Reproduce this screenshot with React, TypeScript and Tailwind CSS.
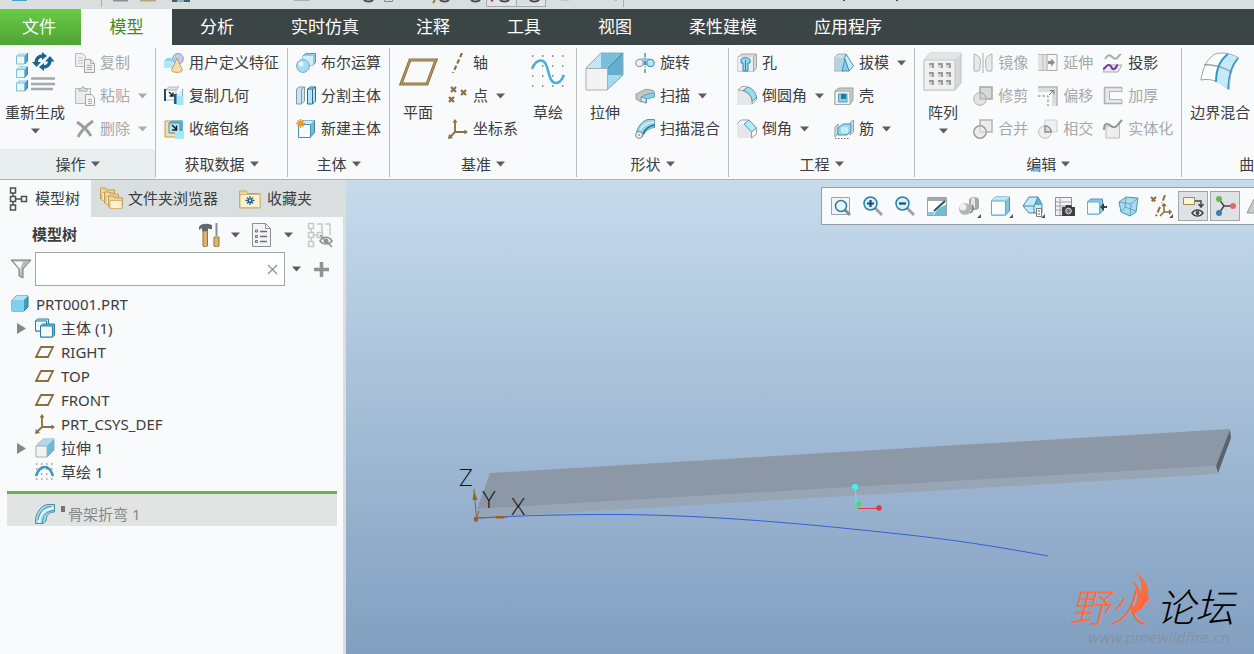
import type { ReactNode } from 'react'

function Svg({ size = 20, box = 20, children }: { size?: number; box?: number; children: ReactNode }) {
  return (
    <svg width={size} height={size} viewBox={`0 0 ${box} ${box}`} fill="none" className="shrink-0" aria-hidden>
      {children}
    </svg>
  )
}

function Caret({ faded = false }: { faded?: boolean }) {
  return (
    <svg width="9" height="6" viewBox="0 0 9 6" className="shrink-0" aria-hidden>
      <path d="M0 0.5h9L4.5 5.5z" fill={faded ? '#a9abad' : '#5b5d60'} />
    </svg>
  )
}

/* small isometric box, used by many of the icons */
function Box({ x, y, s, d }: { x: number; y: number; s: number; d: number }) {
  return (
    <g strokeLinejoin="round">
      <path d={`M${x} ${y + d}l${d} ${-d}h${s}v${s}l${-d} ${d}z`} fill="#4aa3c8" />
      <path d={`M${x} ${y + d}l${d} ${-d}h${s}l${-d} ${d}z`} fill="#b9e4f4" />
      <rect x={x} y={y + d} width={s} height={s} fill="#eaf8fe" stroke="#7dbdd8" strokeWidth="1" />
      <path d={`M${x + s + d} ${y}v${s}l${-d} ${d}`} stroke="#3487ad" strokeWidth="1" />
    </g>
  )
}

const icons = {
  regenerate: (
    <Svg size={40} box={40}>
      <Box x={1.5} y={1} s={8} d={3} />
      <Box x={1.5} y={14.5} s={8} d={3} />
      <Box x={1.5} y={28} s={8} d={3} />
      <path d="M21 11c0-4.500 3-7 7-7" stroke="#19668d" strokeWidth="3.500" />
      <path d="M17 10h9l-4.500 5z" fill="#19668d" />
      <path d="M35 8c0 4.500-3 7-7 7" stroke="#19668d" strokeWidth="3.500" />
      <path d="M30 9.500h9.500L35 4z" fill="#19668d" />
      <path d="M27 0l5 4-5 4zM29 19l-5-4 5-4z" fill="#19668d" />
      <path d="M16 26.500h24M16 32h24M16 37h22" stroke="#a6a8aa" strokeWidth="2.500" />
    </Svg>
  ),
  copy: (
    <Svg>
      <path d="M.5.500h7l3 3v10H.5z" fill="#f0f0f0" stroke="#b5b5b5" />
      <path d="M3 5h5M3 7.500h5M3 10h5" stroke="#c4c4c4" />
      <path d="M9.500 6.500h6l4 4v9h-10z" fill="#eee" stroke="#a5a5a5" />
      <path d="M15.500 6.500v4h4M12 12.500h5M12 14.500h5M12 16.500h5" stroke="#b0b0b0" />
    </Svg>
  ),
  paste: (
    <Svg>
      <rect x=".5" y="2.500" width="15" height="15" fill="#ebebeb" stroke="#b9b9b9" />
      <path d="M4 5V2.500h2.500C6.500 0 9.500 0 9.500 2.500H12V5z" fill="#ddd" stroke="#b0b0b0" />
      <path d="M10.500 8.500h6l3 3v8h-9z" fill="#f4f4f4" stroke="#a5a5a5" />
      <path d="M13 13.500h4M13 15.500h4M13 17.500h4" stroke="#b0b0b0" />
    </Svg>
  ),
  remove: (
    <Svg>
      <path d="M2 3c6 4 11 9 14 14M18 2C11 7 6 12 3 18" stroke="#9b9c9e" strokeWidth="2.800" />
    </Svg>
  ),
  udf: (
    <Svg>
      <circle cx="14" cy="5.800" r="5.300" fill="#c5cbf0" stroke="#8c96cf" />
      <path d="M0 8l3-3h9l-3 3v7H0z" fill="#8fd3ee" />
      <path d="M0 8h9v7H0z" fill="#b4e6f7" />
      <path d="M13 5l5.500 12.500c-1 2.500-9.500 2.500-11 0z" fill="#f2dfae" stroke="#c39c56" />
    </Svg>
  ),
  copyGeometry: (
    <Svg>
      <path d="M1 4l4-3h10l-3 3z" fill="#e4e5e6" stroke="#b5b5b5" />
      <path d="M1 4h11v10H1z" fill="#fff" stroke="#b5b5b5" />
      <path d="M1 3v12" stroke="#1e4e66" strokeWidth="2" />
      <path d="M5 6l4 4M9 6.500V10H5.500" stroke="#222" strokeWidth="1.500" />
      <path d="M10 8h3v10h-3z" fill="#1b5c7c" />
      <path d="M12.500 10h7v9h-7z" fill="#a5e2f7" />
      <path d="M12.500 9l5-4h1v5h-6z" fill="#d9eaf1" />
      <path d="M18.500 3v7" stroke="#74aec7" />
    </Svg>
  ),
  shrinkwrap: (
    <Svg>
      <path d="M1 2h17v5l-5 11H1z" fill="#f6deaa" stroke="#c89a4c" />
      <path d="M5 4l2-2.500h12v11l-3 1z" fill="#5fb0d0" />
      <path d="M5 4h11v10H5z" fill="#b7e2f2" stroke="#3b90b6" />
      <path d="M8 6l4.500 4.500M12.500 6.500V11H8" stroke="#222" strokeWidth="1.500" />
      <rect x="11" y="12" width="9" height="8" fill="#a5e8fb" />
    </Svg>
  ),
  boolean: (
    <Svg>
      <path d="M7 3l2.500-2.500h10v9L17 12H7z" fill="#8ecbe2" stroke="#4b9dbf" />
      <path d="M7 3h10v9H7z" fill="#d5eff9" />
      <circle cx="7" cy="13" r="6.400" fill="#a9dcf0" stroke="#67aecb" />
      <circle cx="5" cy="11" r="2.500" fill="#e3f6fd" />
    </Svg>
  ),
  splitBody: (
    <Svg>
      <path d="M.5 3l3-2h5v14l-3 3h-5z" fill="#c9e4ea" stroke="#7f9ba3" />
      <path d="M5.500 3v15M5.500 3l3-2" stroke="#7f9ba3" />
      <path d="M11.500 3l3-2h5v14l-3 3h-5z" fill="#b5e6f6" stroke="#236f93" />
      <path d="M16.500 3v15M11.500 3h5l3-2" stroke="#236f93" />
    </Svg>
  ),
  newBody: (
    <Svg>
      <path d="M2.500 5l4-3.500h12v12l-4 4.500h-12z" fill="#74bad6" stroke="#3d86a6" />
      <path d="M2.500 5l4-3.500h12l-4 3.500z" fill="#cfeaf5" />
      <path d="M2.500 5.500h12v13h-12z" fill="#f3fbff" stroke="#4793b3" />
      <path d="M4.500 0v9M0 4.500h9M1.500 1.500l6 6M7.500 1.500l-6 6" stroke="#ec9a1e" strokeWidth="1.500" />
    </Svg>
  ),
  plane: (
    <Svg size={40} box={40}>
      <path d="M12 8h26l-9 24H3z" stroke="#8c7040" strokeWidth="3" />
      <path d="M12 8h26l-9 24H3z" stroke="#c0a36b" strokeWidth="1" />
    </Svg>
  ),
  axis: (
    <Svg>
      <path d="M14 0L5 20" stroke="#8b6f3c" strokeWidth="2.200" strokeDasharray="4.500 2.500" />
    </Svg>
  ),
  point: (
    <Svg>
      <path d="M3 1l5 5M8 1L3 6M13 4l5 5M18 4l-5 5M1 11l5 5M6 11l-5 5" stroke="#8b6f3c" strokeWidth="2.200" />
    </Svg>
  ),
  csys: (
    <Svg>
      <path d="M7 2v11h11M7 13l-5 5" stroke="#8b6f3c" strokeWidth="1.800" />
      <path d="M7 0l2.500 3.500h-5zM20 13l-3.500 2.500v-5zM0 20l1-5 4 4z" fill="#8b6f3c" />
    </Svg>
  ),
  sketch: (
    <Svg size={40} box={40}>
      {[4, 14, 24, 34].map((y) => (
        <path key={y} d={`M4 ${y}h34`} stroke="#777" strokeWidth="1.500" strokeDasharray="1.500 8.500" />
      ))}
      <path d="M4 17c4-10 12-12 15-2 3 11 4 16 9 16 4 0 6-3 8-8" stroke="#4aaedb" strokeWidth="2.500" />
    </Svg>
  ),
  extrude: (
    <Svg size={40} box={40}>
      <path d="M1 16L16 1h22v22L22 38" fill="#8ecbe3" />
      <path d="M1 16L16 1v15z" fill="#c3e8f5" />
      <path d="M16 1h22L22 16h-6z" fill="#79bfdb" />
      <path d="M38 1v22L22 38V17z" fill="#62afcf" />
      <path d="M38 23L22 38V23z" fill="#a5daee" />
      <path d="M1 16L16 1h22v22L22 38" stroke="#8fa9b5" />
      <path d="M22 17L38 1" stroke="#3d87a8" />
      <path d="M1 16.500h21.500V38H1z" fill="#f2f3f4" stroke="#aaacae" />
    </Svg>
  ),
  revolve: (
    <Svg>
      <path d="M5 6c3-2 7-2 10 0v8c-3-2-7-2-10 0z" fill="#9bd5ea" />
      <circle cx="4.500" cy="10" r="3.700" fill="#f2f3f4" stroke="#a0a2a4" strokeWidth="1.300" />
      <circle cx="15.500" cy="10" r="3.700" fill="#b9e4f4" stroke="#4aa0c3" strokeWidth="1.300" />
      <path d="M10 0v20" stroke="#444" strokeDasharray="4 1.500 1 1.500" />
    </Svg>
  ),
  sweep: (
    <Svg>
      <path d="M1 8l8-4c3-1.500 6-.5 10 1v5l-9 1v4l-4 1-5-3z" fill="#c3c7c9" stroke="#9a9ea0" />
      <path d="M19.500 7v4l-8 2v4l-5-2v-4c5-3 8-4 13-4z" fill="#8fcfe6" stroke="#5ba2bf" />
      <path d="M6 11l5 1.500V17l-5-2z" fill="#d9f1fa" stroke="#888" />
    </Svg>
  ),
  sweptBlend: (
    <Svg>
      <path d="M1 15C3 7 8 1 13 .5h6.500v8C14 9 10 12 7 18z" fill="#98d3e9" stroke="#5798b4" />
      <path d="M5 11C8 6 12 3 19.500 3" stroke="#d8f1fa" strokeWidth="1.500" />
      <path d="M8 15c2-5 6-8 11.500-9" stroke="#2c6984" strokeWidth="1.500" />
      <circle cx="4" cy="16" r="3.400" fill="#f1f2f3" stroke="#888" />
      <circle cx="4" cy="16" r="1" fill="#999" />
    </Svg>
  ),
  hole: (
    <Svg>
      <path d="M1 4l4-3h14.500v14l-3 3.500H1z" fill="#d6d8da" stroke="#a5a7a9" />
      <path d="M1 4h15.500v14.500H1z" fill="#ededee" />
      <path d="M16.500 4v14.500M16.500 4l3-3" stroke="#a5a7a9" />
      <path d="M4 7c0-3 9-3 9 0v3h-2v8H6v-8H4z" fill="#9bd8ee" stroke="#2e86ab" />
      <path d="M8.500 7v11" stroke="#2e86ab" />
    </Svg>
  ),
  round: (
    <Svg>
      <path d="M0 4h6c6 0 9 5 9 10v5H0z" fill="#e5e6e7" />
      <path d="M1 4l4-3.500c9-.5 14 5 14.500 13L15 18c1-8-5-14-14-14z" fill="#f0f1f2" stroke="#9b9da0" />
      <path d="M6 4.500L11 1c5 1.500 8 6 8.500 11L15 15c0-5-4-9.500-9-10.500z" fill="#9fdcf2" stroke="#4d9dbc" />
    </Svg>
  ),
  chamfer: (
    <Svg>
      <path d="M0 5h7l7 7v7H0z" fill="#e5e6e7" />
      <path d="M7 5l5-4 7.500 8-5 4z" fill="#b4e8f9" stroke="#4d9dbc" />
      <path d="M0 5l4-4h8M14.500 19v-6M19.500 9v6l-5 4" stroke="#9b9da0" />
    </Svg>
  ),
  draft: (
    <Svg>
      <path d="M0 5l4-4h8l-2 17H0z" fill="#d2dde2" />
      <path d="M0 5h10v13H0z" fill="#a8cfdd" opacity=".7" />
      <path d="M0 5l4-4h8M0 18h10" stroke="#a6b0b4" />
      <path d="M12 1l7.500 12-4.500 5-5-12z" fill="#c6edf9" stroke="#3d95b9" />
      <path d="M11 6l-3 12h7z" fill="#8ccde6" stroke="#3d95b9" />
    </Svg>
  ),
  shell: (
    <Svg>
      <path d="M1 5l4-3h14v12l-3 4.500H1z" fill="#c9cbcd" stroke="#9fa1a3" />
      <path d="M1 5h15v13.500H1z" fill="#eeefef" stroke="#a6a8aa" />
      <path d="M4.500 8h8.500v8H4.500z" fill="#8ecfe8" stroke="#5b9fbb" />
      <path d="M7 8h5v5H7z" fill="#1d7ba7" />
    </Svg>
  ),
  rib: (
    <Svg>
      <path d="M1 8l3-3v10l-3 3zM16 4l3.500-3v12L16 16z" fill="#d8dadb" stroke="#8aa2ad" />
      <path d="M4 9l5-4h8v7l-4 4H4z" fill="#9cd8ed" stroke="#3f93b5" />
      <path d="M7 8h7v6H7z" fill="#c5ecf9" />
      <path d="M1 19.500h14" stroke="#777" strokeDasharray="1.500 1.500" />
    </Svg>
  ),
  pattern: (
    <Svg size={40} box={40}>
      <path d="M1 8l6-7h31v30l-6 7H1z" fill="#d5d6d7" stroke="#c3c4c5" />
      <path d="M1 8l6-7h31l-6 7z" fill="#e4e5e5" />
      <path d="M1 8h31v30H1z" fill="#f0f0f0" stroke="#c5c5c5" />
      {[11, 20, 28].map((y) => (
        <g key={y}>
          {[6, 15, 23].map((x) => (
            <g key={x}>
              <rect x={x} y={y} width="5" height="5" fill="#9b9b9b" />
              <path d={`M${x} ${y + 5}v-3h3v3`} fill="#d3d3d3" />
            </g>
          ))}
        </g>
      ))}
    </Svg>
  ),
  mirror: (
    <Svg>
      <path d="M1 1c4 1 7 4 6.500 8-.5 4 0 7-1.500 9H1zM19 1c-4 1-7 4-6.500 8 .5 4 0 7 1.500 9H19z" fill="#e9e9e9" stroke="#b3b3b3" />
      <path d="M10 0v20" stroke="#a9a9a9" />
    </Svg>
  ),
  extend: (
    <Svg>
      <path d="M0 1.500h9v16H0z" fill="#e2e2e2" />
      <path d="M0 1.500h9M0 17.500h9M5 2v15" stroke="#bdbdbd" />
      <path d="M9 1.500h10v16H9z" fill="#f7f7f7" stroke="#a9a9a9" />
      <path d="M10 8h3V5.500L17 9.500l-4 4V11h-3z" fill="#8f8f8f" />
    </Svg>
  ),
  project: (
    <Svg>
      <path d="M2 6c2-3 4-5 6-3s4 4 6 2 3-4 4-3" stroke="#aaabad" strokeWidth="2" />
      <path d="M4 12h15l-4 7H0z" fill="#ececec" stroke="#a9abad" />
      <path d="M0 16c3-1 3-4 6-4s2 5 5 4 2-4 4-4" stroke="#7437b5" strokeWidth="2.200" />
    </Svg>
  ),
  trim: (
    <Svg>
      <path d="M7 1h12v12H7z" fill="#d9d9d9" stroke="#a5a5a5" strokeWidth="1.500" />
      <circle cx="7" cy="13" r="6.300" fill="#e4e4e4" stroke="#b0b0b0" />
      <path d="M7 7c4 0 6 3 6 6H7z" fill="#d3d3d3" stroke="#aaa" />
    </Svg>
  ),
  offset: (
    <Svg>
      <path d="M0 1h19v19h-5V6H0z" fill="#dedede" />
      <path d="M0 1h19v19" stroke="#b4b4b4" strokeWidth="1.500" />
      <path d="M0 10h10v10" stroke="#777" strokeDasharray="2.500 2" />
      <path d="M11 9l4-4M12 4.500h4v4" stroke="#777" />
    </Svg>
  ),
  thicken: (
    <Svg>
      <path d="M1.500 1.500H19v4H6.500v8H19v4H1.500z" fill="#e8e8e8" stroke="#b1b1b1" />
      <path d="M19 1.500H1.500v16H19" stroke="#b0b0b0" strokeWidth="1.500" />
    </Svg>
  ),
  merge: (
    <Svg>
      <path d="M7 1h12v12H7z" fill="#ececec" stroke="#b4b4b4" strokeWidth="1.500" />
      <circle cx="7" cy="13" r="6.200" fill="#ededed" stroke="#9e9e9e" strokeWidth="1.500" />
      <path d="M7 13V7M7 13h6" stroke="#c5c5c5" />
    </Svg>
  ),
  intersect: (
    <Svg>
      <path d="M7 1h12v12H7z" fill="#f0f0f0" stroke="#cfcfcf" />
      <circle cx="7" cy="13" r="6.300" fill="#ececec" fillOpacity=".8" stroke="#bdbdbd" />
      <path d="M7 7c4 0 6 3 6 6H7z" fill="#dcdcdc" stroke="#8f8f8f" strokeWidth="1.500" />
    </Svg>
  ),
  solidify: (
    <Svg>
      <path d="M3 8c4-3 6 2 9 0s3-4 4.500-4V19H3z" fill="#eee" stroke="#bbb" />
      <path d="M1 11c0-9 5-6 8-3.500C13 10 15 5 19 1" stroke="#949494" strokeWidth="2" />
    </Svg>
  ),
  boundary: (
    <Svg size={40} box={40}>
      <path d="M1 28C3 14 8 6 15 2c7-2 15-1 24 4-7 8-9 16-10 32-8-8-17-12-28-10z" fill="#fafcfd" stroke="#9fa2a4" />
      <path d="M27 2l12 4c-7 8-9 16-10 32-4-4-8-6-13-8 0-14 4-22 11-28z" fill="#c3eaf8" />
      <path d="M4 13c8-1 16 1 28 7" stroke="#9fa2a4" strokeWidth="1.500" />
      <path d="M28 2c-8 6-12 15-12 28" stroke="#3797c2" strokeWidth="2" />
      <path d="M38 6c-7 8-9 16-10 31" stroke="#3797c2" strokeWidth="1.500" />
    </Svg>
  ),
}

type IconName = keyof typeof icons
type Command = { icon: IconName; label: string; caret?: boolean; faded?: boolean }

function SmallCommand({ icon, label, caret, faded }: Command) {
  return (
    <button
      type="button"
      className={`flex h-[33px] items-center whitespace-nowrap ${faded ? 'text-[#a6a8aa]' : 'text-[#3b3d40]'}`}
    >
      {icons[icon]}
      <span className="pl-[5px]">{label}</span>
      {caret && (
        <span className="pl-2">
          <Caret faded={faded} />
        </span>
      )}
    </button>
  )
}

function BigCommand({ icon, label, caret }: Command) {
  return (
    <button type="button" className="flex min-w-10 flex-col items-center self-start whitespace-nowrap pt-[6px]">
      {icons[icon]}
      <span className="pt-[10px] leading-5">{label}</span>
      {caret && (
        <span className="pt-[6px]">
          <Caret />
        </span>
      )}
    </button>
  )
}

function CommandColumn({ items }: { items: Command[] }) {
  return (
    <div className="flex flex-col items-start">
      {items.map((item) => (
        <SmallCommand key={item.label} {...item} />
      ))}
    </div>
  )
}

function Group({ title, active, children }: { title: string; active?: boolean; children: ReactNode }) {
  return (
    <>
      <section className="flex shrink-0 flex-col">
        <div className={`flex h-[99px] gap-[10px] pr-2 ${active ? 'pl-[5px]' : 'pl-2'}`}>{children}</div>
        <button
          type="button"
          className={`mt-1 flex h-[30px] items-center justify-center gap-[5px] whitespace-nowrap ${active ? 'bg-[#e9eeef]' : ''}`}
        >
          {title}
          <Caret />
        </button>
      </section>
      <span className="my-[2px] w-px shrink-0 bg-[#b9bec1]" />
    </>
  )
}

/* the lower edge of the quick access toolbar */
function QuickAccess() {
  return (
    <div className="h-[9px] overflow-hidden bg-[#d9dfdf]">
      <svg width="960" height="9" viewBox="0 0 960 9" fill="none" aria-hidden>
        <path d="M12 0h15" stroke="#4d9fc0" strokeWidth="2" />
        <path d="M101.500 0v7M623.500 0v7" stroke="#a9aeb0" />
        <path d="M113 .5h15" stroke="#8d9092" strokeWidth="2" />
        <path d="M140 .5h16" stroke="#b8a67c" strokeWidth="2" />
        <path d="M172 .5h18" stroke="#4b5a63" strokeWidth="3" />
        <path d="M177 .5h7" stroke="#7fb6d0" strokeWidth="3" />
        <path d="M294 .5h16" stroke="#adb1b3" />
        <path d="M364 0c2 2 7 2 9 0M440 0c2 2 7 2 9 0M471 0c2 2 7 2 9 0" stroke="#45494b" strokeWidth="2" />
        <path d="M384.500 0v1.500h8V0" stroke="#888" />
        <path d="M433 3l2-3" stroke="#9b7a3f" strokeWidth="2" />
        <path d="M486.500 0v6.500h30V0M516.500 6.500h29V0" fill="#e0e4e4" stroke="#a5a9ab" />
        <path d="M500 0c2 2 7 2 9 0M530 0c2 2 7 2 9 0" stroke="#45494b" strokeWidth="2" />
        <path d="M491 1l2-1" stroke="#9b3f3f" strokeWidth="2" />
        <path d="M561 .5h8M614 .5h3" stroke="#bfc4c5" />
        <path d="M843 .5h2M896 .5h2" stroke="#45494b" />
      </svg>
    </div>
  )
}

const tabs = ['分析', '实时仿真', '注释', '工具', '视图', '柔性建模', '应用程序']

function TabBar() {
  return (
    <nav className="flex h-9 shrink-0 overflow-hidden bg-[#3c4545] text-[17px] text-white">
      <button type="button" className="w-[81px] shrink-0 bg-linear-to-b from-[#68cd48] to-[#4fa335] pr-[3px]">
        文件
      </button>
      <button type="button" className="w-[91px] shrink-0 bg-[#f8fafb] text-[#3f8a25]">
        模型
      </button>
      {tabs.map((tab) => (
        <button key={tab} type="button" className="mr-px shrink-0 whitespace-nowrap px-7">
          {tab}
        </button>
      ))}
    </nav>
  )
}

function Ribbon() {
  return (
    <div className="flex h-[135px] shrink-0 overflow-hidden border-b border-[#a9b8c0] bg-[#f8fafb] pt-px">
      <Group title="操作" active>
        <BigCommand icon="regenerate" label="重新生成" caret />
        <CommandColumn
          items={[
            { icon: 'copy', label: '复制', faded: true },
            { icon: 'paste', label: '粘贴', caret: true, faded: true },
            { icon: 'remove', label: '删除', caret: true, faded: true },
          ]}
        />
      </Group>
      <Group title="获取数据">
        <CommandColumn
          items={[
            { icon: 'udf', label: '用户定义特征' },
            { icon: 'copyGeometry', label: '复制几何' },
            { icon: 'shrinkwrap', label: '收缩包络' },
          ]}
        />
      </Group>
      <Group title="主体">
        <CommandColumn
          items={[
            { icon: 'boolean', label: '布尔运算' },
            { icon: 'splitBody', label: '分割主体' },
            { icon: 'newBody', label: '新建主体' },
          ]}
        />
      </Group>
      <Group title="基准">
        <BigCommand icon="plane" label="平面" />
        <CommandColumn
          items={[
            { icon: 'axis', label: '轴' },
            { icon: 'point', label: '点', caret: true },
            { icon: 'csys', label: '坐标系' },
          ]}
        />
        <BigCommand icon="sketch" label="草绘" />
      </Group>
      <Group title="形状">
        <BigCommand icon="extrude" label="拉伸" />
        <CommandColumn
          items={[
            { icon: 'revolve', label: '旋转' },
            { icon: 'sweep', label: '扫描', caret: true },
            { icon: 'sweptBlend', label: '扫描混合' },
          ]}
        />
      </Group>
      <Group title="工程">
        <CommandColumn
          items={[
            { icon: 'hole', label: '孔' },
            { icon: 'round', label: '倒圆角', caret: true },
            { icon: 'chamfer', label: '倒角', caret: true },
          ]}
        />
        <CommandColumn
          items={[
            { icon: 'draft', label: '拔模', caret: true },
            { icon: 'shell', label: '壳' },
            { icon: 'rib', label: '筋', caret: true },
          ]}
        />
      </Group>
      <Group title="编辑">
        <BigCommand icon="pattern" label="阵列" caret />
        <CommandColumn
          items={[
            { icon: 'mirror', label: '镜像', faded: true },
            { icon: 'trim', label: '修剪', faded: true },
            { icon: 'merge', label: '合并', faded: true },
          ]}
        />
        <CommandColumn
          items={[
            { icon: 'extend', label: '延伸', faded: true },
            { icon: 'offset', label: '偏移', faded: true },
            { icon: 'intersect', label: '相交', faded: true },
          ]}
        />
        <CommandColumn
          items={[
            { icon: 'project', label: '投影' },
            { icon: 'thicken', label: '加厚', faded: true },
            { icon: 'solidify', label: '实体化', faded: true },
          ]}
        />
      </Group>
      <section className="flex w-[158px] shrink-0 flex-col">
        <div className="flex h-[99px] px-2">
          <BigCommand icon="boundary" label="边界混合" />
        </div>
        <button type="button" className="mt-1 flex h-[30px] items-center justify-center gap-[5px]">
          曲面
          <Caret />
        </button>
      </section>
    </div>
  )
}

const smallPlane = (
  <Svg>
    <path d="M6 5h12l-5 10H1z" stroke="#8b6f3c" strokeWidth="1.800" />
  </Svg>
)

const partIcon = (
  <Svg>
    <path d="M1 6l4-4h12v11l-4 4H1z" fill="#3f9cc4" stroke="#2d7ea3" />
    <path d="M1 6l4-4h12l-4 4z" fill="#b4e4f6" />
    <path d="M1 6h12v11H1z" fill="#7fd0ee" />
  </Svg>
)

const bodiesIcon = (
  <Svg>
    <path d="M.5 3l2-2h11v10l-2 2H.5z" fill="#c4eaf8" stroke="#2d7ea3" />
    <path d="M.5 3h11v10H.5z" fill="#f0fafe" stroke="#2d7ea3" />
    <path d="M5.500 8l2-2h12v11l-2 2h-12z" fill="#6dbddb" stroke="#2d7ea3" />
    <path d="M5.500 8h12v11h-12z" fill="#f0fafe" stroke="#2d7ea3" />
  </Svg>
)

const extrudeSmall = (
  <Svg>
    <path d="M1 8l7-7h11v11l-7 7z" fill="#6fb9d8" stroke="#8fa9b5" />
    <path d="M1 8l7-7h11l-7 7z" fill="#a9daee" />
    <path d="M1 8h11v11H1z" fill="#f2f3f4" stroke="#aaacae" />
  </Svg>
)

const sketchSmall = (
  <Svg>
    <path d="M1 2h18M1 7h18M1 12h18M1 17h18" stroke="#999" strokeWidth="1.500" strokeDasharray="1.500 3.500" />
    <path d="M1 14C3 8 6 5 10 5s6 3 8 9" stroke="#3797c2" strokeWidth="2.500" />
  </Svg>
)

const bendIcon = (
  <Svg>
    <path d="M.5 15C2 7 7 1 13 .5h6.500V8c-6 0-8 3-8.500 9l-3 2.500H.5z" fill="#a7dcef" stroke="#4b8eaa" />
    <path d="M4 19C5 10 9 5 19 4" stroke="#e9f8fd" strokeWidth="2" />
    <path d="M7.500 19c0-8 4-12 12-12.500M3 16C4 9 8 3 16 2.500" stroke="#4b8eaa" />
  </Svg>
)

const tree: { label: string; icon: ReactNode; expandable?: boolean }[] = [
  { label: '主体 (1)', icon: bodiesIcon, expandable: true },
  { label: 'RIGHT', icon: smallPlane },
  { label: 'TOP', icon: smallPlane },
  { label: 'FRONT', icon: smallPlane },
  { label: 'PRT_CSYS_DEF', icon: icons.csys },
  { label: '拉伸 1', icon: extrudeSmall, expandable: true },
  { label: '草绘 1', icon: sketchSmall },
]

function PanelTabs() {
  return (
    <div className="flex h-[37px] bg-[#d9dfdf]">
      <button type="button" className="flex w-[91px] items-center gap-[7px] bg-[#f8fafb] pl-[9px]">
        <svg width="19" height="26" viewBox="0 0 19 26" fill="none" aria-hidden>
          <path d="M1.500 2h5v5h-5zM1.500 10.500h5v5h-5zM1.500 19h5v5h-5zM12.500 10.500h5v5h-5zM4 7v3.500M4 15.500V19M6.500 13h6" stroke="#4d5052" strokeWidth="1.500" />
        </svg>
        模型树
      </button>
      <button type="button" className="flex items-center gap-1 pl-[9px]">
        <Svg size={24} box={24}>
          {[0, 4, 8].map((n) => (
            <g key={n}>
              <path d={`M${n + 0.5} ${n + 1}h5l1 2h8v9h-14z`} fill="#f0d59c" stroke="#bf9c5c" />
              <path d={`M${n + 2} ${n + 5.5}h12v8h-12z`} fill="#fdf1cf" stroke="#d3b377" />
            </g>
          ))}
        </Svg>
        文件夹浏览器
      </button>
      <button type="button" className="flex items-center gap-[6px] pl-[21px]">
        <Svg size={22} box={22}>
          <path d="M.5 3h7l1 2.500h12.500V20H.5z" fill="#f0d59c" stroke="#c5a364" />
          <path d="M1 6.500h20v13H1z" fill="#fdf1cf" stroke="#d6b87f" />
          <path d="M11 8v9M6.500 12.500h9M8 9.500l6 6M14 9.500l-6 6" stroke="#19668d" strokeWidth="1.300" />
          <circle cx="11" cy="12.500" r="1" fill="#fdf1cf" />
        </Svg>
        收藏夹
      </button>
    </div>
  )
}

function ModelTree() {
  return (
    <aside className="flex w-[346px] shrink-0 flex-col border-r-[3px] border-[#d9dfdf] bg-[#f8fafb]">
      <PanelTabs />
      <div className="flex h-[35px] items-center pl-8">
        <h2 className="font-bold">模型树</h2>
        <div className="ml-auto flex items-center gap-[10px] pr-[10px]">
          <button type="button" aria-label="设置" className="flex items-center gap-[9px]">
            <Svg size={24} box={24}>
              <path d="M1 4c2-4 8-4 13-2v4h-3l-1-1v3H4V5L1 7z" fill="#626870" />
              <path d="M5 8h4.500v15c-1 1-3.500 1-4.500 0z" fill="#dcb473" stroke="#9b7332" />
              <path d="M18.500 0v13" stroke="#8a9096" strokeWidth="2" />
              <path d="M16 14h5v9c-1 1-4 1-5 0z" fill="#dcb473" stroke="#9b7332" />
            </Svg>
            <Caret />
          </button>
          <button type="button" aria-label="显示" className="flex items-center gap-[10px]">
            <Svg size={24} box={24}>
              <path d="M2.500.500h13l5 5v18h-18z" fill="#f1f3f5" stroke="#8d9195" />
              <path d="M15.500.500v5h5" stroke="#8d9195" />
              <path d="M10 8.500h7M10 13.500h7M10 18.500h7" stroke="#6c7074" strokeWidth="1.500" />
              <path d="M5.500 7h2v2h-2zM5.500 12.500h2v2h-2zM5.500 17.500h2v2h-2z" stroke="#6c7074" />
            </Svg>
            <Caret />
          </button>
          <button type="button" aria-label="隐藏" className="pl-1">
            <Svg size={26} box={26}>
              <path d="M1.500 1.500h5v5h-5zM1.500 10.500h5v5h-5zM1.500 19.500h5v5h-5zM10.500 10.500h5v5h-5zM4 6.500v4M4 15.500v4M6.500 13h4M10 2h5v9M18 2h5v11" stroke="#c6c8ca" strokeWidth="1.500" />
              <path d="M13 19c3-5 9-5 12 0-3 4-9 4-12 0z" stroke="#919395" strokeWidth="1.500" />
              <circle cx="19" cy="19" r="2.500" fill="#919395" />
              <path d="M13 13l12 12" stroke="#919395" strokeWidth="1.500" />
            </Svg>
          </button>
        </div>
      </div>
      <div className="flex items-center pl-[10px]">
        <Svg size={22} box={22}>
          <path d="M1 2h20l-8 9v9l-4-2v-7z" fill="#b9bbbd" stroke="#77797c" />
          <path d="M4 3.500h9l-2.500 7v6L10 11z" fill="#fafafa" />
        </Svg>
        <div className="ml-[3px] flex h-[34px] w-[250px] items-center border border-[#a3a6a8] bg-white">
          <input type="text" aria-label="过滤模型树" className="min-w-0 flex-1 px-2 outline-none" />
          <button type="button" aria-label="清除" className="pr-[6px]">
            <Svg size={11} box={11}>
              <path d="M1 1l9 9M10 1l-9 9" stroke="#8f9193" strokeWidth="1.300" />
            </Svg>
          </button>
        </div>
        <button type="button" aria-label="过滤选项" className="pl-[7px]">
          <Caret />
        </button>
        <button type="button" aria-label="添加" className="pl-[13px]">
          <Svg size={15} box={15}>
            <path d="M7.500 0v15M0 7.500h15" stroke="#8f9193" strokeWidth="3.500" />
          </Svg>
        </button>
      </div>
      <ul className="pt-[6px]">
        <li className="flex h-6 items-center gap-[5px] pl-[11px]">
          {partIcon}
          PRT0001.PRT
        </li>
        {tree.map(({ label, icon, expandable }) => (
          <li key={label} className="flex h-6 items-center pl-4">
            <span className="flex w-[19px] shrink-0">
              {expandable && (
                <button type="button" aria-label={`展开 ${label}`}>
                  <Svg size={11} box={11}>
                    <path d="M1 0l9 5.500L1 11z" fill="#85888a" />
                  </Svg>
                </button>
              )}
            </span>
            {icon}
            <span className="pl-[6px]">{label}</span>
          </li>
        ))}
      </ul>
      <div className="mx-[7px] mt-[7px] mr-[6px] flex h-[35px] items-center border-t-[3px] border-[#62b84a] bg-[#e2e3e3] pl-7 pt-2 text-[#85888a]">
        {bendIcon}
        <span className="ml-[6px] mt-1 h-[6px] w-1 self-start bg-[#707375]" />
        <span className="pl-[3px]">骨架折弯 1</span>
      </div>
    </aside>
  )
}

const corner = <path d="M24 20v4h-4z" fill="#555" />

const viewTools: { label: string; pressed?: boolean; art: ReactNode }[] = [
  {
    label: '重新调整',
    art: (
      <>
        <path d="M2.500 3.500h18v17h-18z" fill="#f3f4f4" stroke="#9fa2a4" />
        <path d="M15 15l6 6" stroke="#8b8f92" strokeWidth="3" />
        <circle cx="12" cy="12" r="5.500" fill="#e8f7fd" stroke="#2b7ea5" strokeWidth="1.500" />
      </>
    ),
  },
  {
    label: '放大',
    art: (
      <>
        <path d="M14 14l7 7" stroke="#a0a3a5" strokeWidth="3" />
        <circle cx="9.500" cy="9.500" r="6.500" fill="#d8f0fa" stroke="#2b7ea5" strokeWidth="1.500" />
        <path d="M6 9.500h7M9.500 6v7" stroke="#174e6c" strokeWidth="2.200" />
      </>
    ),
  },
  {
    label: '缩小',
    art: (
      <>
        <path d="M14 14l7 7" stroke="#a0a3a5" strokeWidth="3" />
        <circle cx="9.500" cy="9.500" r="6.500" fill="#d8f0fa" stroke="#2b7ea5" strokeWidth="1.500" />
        <path d="M6 9.500h7" stroke="#174e6c" strokeWidth="2.200" />
      </>
    ),
  },
  {
    label: '重画',
    art: (
      <>
        <path d="M2.500 3.500h19v18h-19z" fill="#fff" stroke="#9fa2a4" />
        <path d="M3 4h18v3H3z" fill="#a4a8aa" />
        <path d="M9 21c3-6 7-9 12-10v10z" fill="#6dbcd8" />
        <path d="M3 18h7l-2 3H3z" fill="#8cc9df" />
        <path d="M9 17L20 7" stroke="#2c4f60" strokeWidth="2" />
      </>
    ),
  },
  {
    label: '渲染',
    art: (
      <>
        <path d="M12 6c0-4 10-4 10 0v8c-2 3-8 3-10 0z" fill="#a8a8a8" />
        <path d="M14 5c1-2 4-2 4 0v9l-4-1z" fill="#e3e3e3" />
        <circle cx="8" cy="15" r="6" fill="#b5b5b5" />
        <circle cx="6" cy="13" r="3.500" fill="#efefef" />
        <path d="M13 19c3-2 4-5 2-8" stroke="#7d7d7d" strokeWidth="1.500" />
        {corner}
      </>
    ),
  },
  {
    label: '显示样式',
    art: (
      <>
        <path d="M2.500 7l4-4h14v14l-4 4h-14z" fill="#7ec5df" stroke="#4596b7" />
        <path d="M2.500 7l4-4h14l-4 4z" fill="#bde6f5" />
        <path d="M2.500 7h14v14h-14z" fill="#f7fcfe" stroke="#62a9c5" />
        {corner}
      </>
    ),
  },
  {
    label: '已保存方向',
    art: (
      <>
        <path d="M2 12l6-9h9l4 7v9H8z" fill="#c6eaf6" stroke="#3f8cac" />
        <path d="M17 3l4 8h-8z" fill="#5fb0d0" />
        <path d="M2 12h11l4-9M13 12v7" stroke="#3f8cac" />
        <path d="M15.500 14.500h5v8h-5z" fill="#fff" stroke="#77797b" />
        <path d="M18 16v2M18 19v2" stroke="#555" />
        {corner}
      </>
    ),
  },
  {
    label: '视图管理器',
    art: (
      <>
        <path d="M2.500 3.500h16v18h-16z" fill="#f3f3f3" stroke="#8d9092" />
        <path d="M3 8h15M3 12h15M3 16h15M7 4v17" stroke="#9fa2a4" />
        <path d="M9 13h3l1-2h5l1 2h3v9H9z" fill="#3d3f41" />
        <circle cx="15.500" cy="17" r="2.800" fill="#77797b" stroke="#ddd" />
      </>
    ),
  },
  {
    label: '透视图',
    art: (
      <>
        <path d="M2.500 8l3-3h12v12l-3 3h-12z" fill="#8acbe3" stroke="#4c9bbb" />
        <path d="M2.500 8h12v12h-12z" fill="#f3fbfe" stroke="#69adc8" />
        <path d="M15 13l4-4v3h3v2h-3v3z" fill="#3d3f41" />
      </>
    ),
  },
  {
    label: '截面',
    art: (
      <>
        <path d="M2 8l7-5 12 1-2 14-6 4-9-4z" fill="#a7dcee" stroke="#4e95b1" />
        <path d="M9 3l-1 10-4 5M8 13l11 4M2 8l12 2 7-6M14 10l-1 12" stroke="#69a4bb" />
      </>
    ),
  },
  {
    label: '基准显示过滤器',
    art: (
      <>
        <path d="M2 3l5 5M7 3L2 8M16 1l-3 8M11 13l-4 9" stroke="#8b6f3c" strokeWidth="2" strokeDasharray="6 2" />
        <path d="M15 10v8h7M15 18l-4 4M13 12l2-2 2 2M20 16l2 2-2 2" stroke="#8b6f3c" strokeWidth="1.500" />
        {corner}
      </>
    ),
  },
  {
    label: '注释显示',
    pressed: true,
    art: (
      <>
        <path d="M2.500 3.500h11v7h-11z" fill="#fdf3d3" stroke="#9b8b62" />
        <path d="M14 7h6v5M17.500 10l2.500 3 2.500-3" stroke="#44474a" strokeWidth="1.500" />
        <path d="M11 19c3-4 8-4 11 0-3 4-8 4-11 0z" fill="#fff" stroke="#44474a" strokeWidth="1.500" />
        <circle cx="16.500" cy="19" r="2" fill="#44474a" />
      </>
    ),
  },
  {
    label: '旋转中心',
    pressed: true,
    art: (
      <>
        <path d="M6 5l5 7 8 0M11 12l-5 7" stroke="#44474a" strokeWidth="1.500" />
        <circle cx="6" cy="5" r="3" fill="#67b657" />
        <circle cx="20" cy="12" r="3" fill="#e0696b" />
        <circle cx="6" cy="19" r="3" fill="#3981ae" />
      </>
    ),
  },
  {
    label: '仿真显示',
    art: <path d="M2 19L9 5l7 2 5 12z" fill="#c9cbcd" stroke="#919395" />,
  },
]

function ViewToolbar() {
  return (
    <div className="absolute left-[475px] right-0 top-[7px] flex h-[38px] items-center gap-[2px] overflow-hidden border border-r-0 border-[#949ea5] bg-[#f8fafb] pl-1">
      {viewTools.map(({ label, pressed, art }) => (
        <button
          key={label}
          type="button"
          aria-label={label}
          className={`flex size-[30px] shrink-0 items-center justify-center border ${pressed ? 'border-[#9fa5a9] bg-[#dfe2e4]' : 'border-transparent'}`}
        >
          <Svg size={24} box={24}>
            {art}
          </Svg>
        </button>
      ))}
    </div>
  )
}

function Scene() {
  return (
    <svg
      viewBox="346 180 908 474"
      preserveAspectRatio="xMinYMin meet"
      fill="none"
      className="absolute inset-0 size-full"
      aria-hidden
    >
      <path d="M490 473L1230 429L1216 466L477 509z" fill="#8c98a6" />
      <path d="M477 509L1216 466L1217 474L880 494L560 513L477 518z" fill="#97a5b5" />
      <path d="M1230 429.500L1231 438L1218 473L1216 466z" fill="#59626d" />
      <path d="M477 518C500 517 540 514.500 610 514.500C690 514.500 780 521 890 533C950 539 1000 547 1048 556" stroke="#3560d8" />
      <path d="M474 489L476.500 518L508 517M476 519L479 511" stroke="#94612f" />
      <path d="M472.500 500l1.500-9 3.500 9zM496 516h8v2.500h-8zM474 517h4v4.500h-4z" fill="#94612f" />
      <g fill="#10151c" fontFamily="Lato" fontSize="23" fontWeight="300">
        <text x="459" y="486">Z</text>
        <text x="482" y="508">Y</text>
        <text x="511" y="515">X</text>
      </g>
      <path d="M855.500 488L856.500 508" stroke="#4eeff2" />
      <path d="M858 508.500h20" stroke="#db3c46" />
      <path d="M857 509v-7" stroke="#34e648" />
      <circle cx="855" cy="487" r="3" fill="#3cf3f4" />
      <circle cx="859" cy="504" r="2" fill="#34e648" />
      <circle cx="879" cy="508" r="2.700" fill="#e3343f" />
    </svg>
  )
}

function Watermark() {
  return (
    <div className="absolute bottom-2 right-5 flex flex-col items-end">
      <div className="flex gap-2 text-[39px] font-light italic leading-[46px]">
        <span className="relative text-[#ff6b3a]">
          野火
          <svg width="20" height="44" viewBox="0 0 20 44" className="absolute -top-3 right-0" aria-hidden>
            <path d="M8 0c11 9 16 20 10 30-3 5-6 8-12 12-2-4-2-8 1-9C11 28 10 18 4 9c5 3 8 7 8 13C15 15 14 8 8 0z" fill="#ff6b3a" />
          </svg>
        </span>
        <span className="text-black">论坛</span>
      </div>
      <a
        href="#forum"
        className="pr-1 text-[14px] italic leading-4 text-[#8492a6] [font-family:'DejaVu_Sans',sans-serif]"
      >
        www.proewildfire.cn
      </a>
    </div>
  )
}

export default function App() {
  return (
    <div className="flex min-h-screen flex-col overflow-hidden text-[15px] text-[#3b3d40] [font-family:'Noto_Sans','Noto_Sans_CJK_SC',sans-serif]">
      <QuickAccess />
      <TabBar />
      <Ribbon />
      <div className="flex flex-1">
        <ModelTree />
        <main className="relative flex-1 overflow-hidden bg-linear-to-b from-[#c7dbeb] to-[#829fc1]">
          <Scene />
          <ViewToolbar />
          <Watermark />
        </main>
      </div>
    </div>
  )
}
